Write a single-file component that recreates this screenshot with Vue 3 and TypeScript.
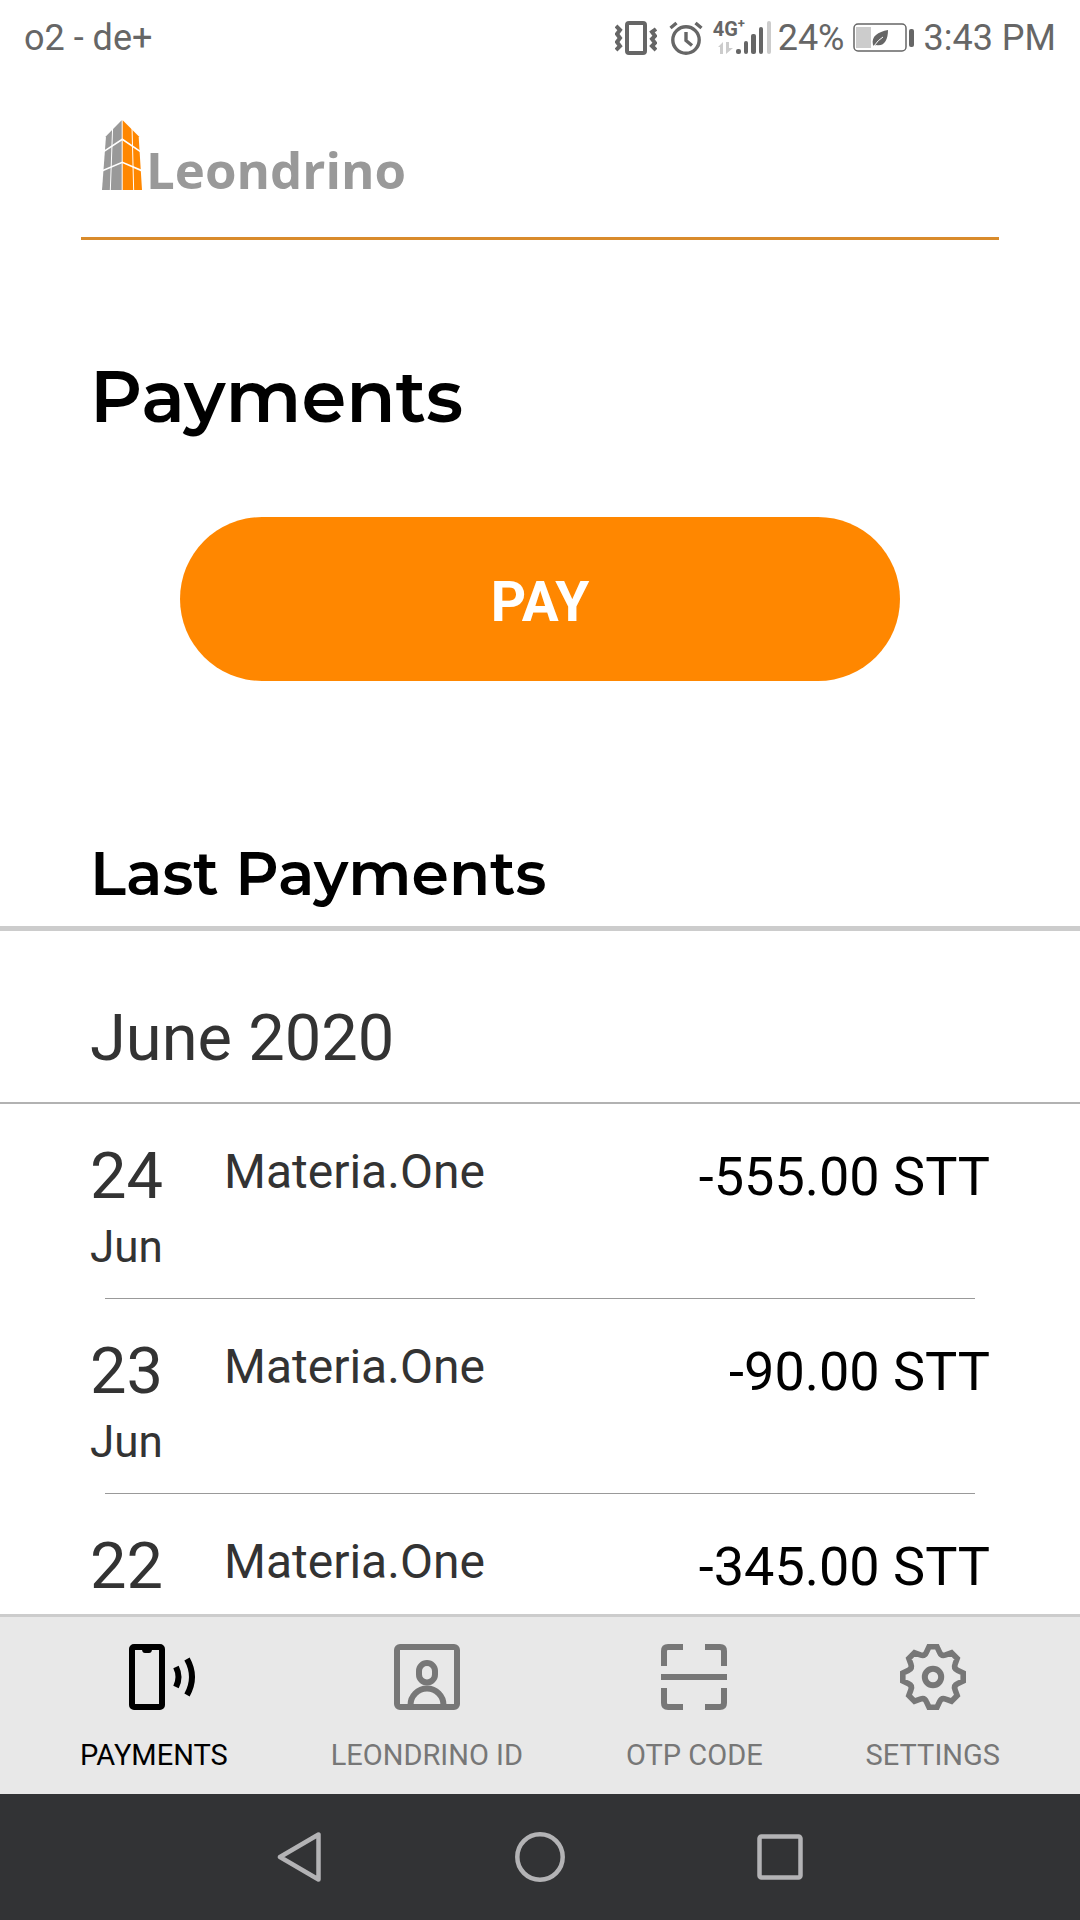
<script setup lang="ts">
interface Payment {
  day: string
  month?: string
  payee: string
  amount: string
}

const payments: Payment[] = [
  { day: '24', month: 'Jun', payee: 'Materia.One', amount: '-555.00 STT' },
  { day: '23', month: 'Jun', payee: 'Materia.One', amount: '-90.00 STT' },
  { day: '22', payee: 'Materia.One', amount: '-345.00 STT' },
]

// Outline of an eight-toothed gear around the origin
function gearPath(): string {
  const turn = (x: number, y: number, i: number): string => {
    const a = (i * Math.PI) / 4
    const px = x * Math.cos(a) - y * Math.sin(a)
    const py = x * Math.sin(a) + y * Math.cos(a)
    return `${px.toFixed(2)} ${py.toFixed(2)}`
  }
  let d = ''
  for (let i = 0; i < 8; i++) {
    d += `${i === 0 ? 'M' : 'L'}${turn(-4, -30.2, i)}L${turn(4, -30.2, i)}`
    d += `L${turn(6.6, -24.6, i)}Q${turn(8.4, -20.4, i)} ${turn(-6.6, -24.6, i + 1)}`
  }
  return d + 'Z'
}

const gear = gearPath()
</script>

<template>
  <div class="screen">
    <div class="status">
      <span>o2 - de+</span>
      <div class="status-right">
        <svg class="vibrate" width="42" height="34" viewBox="0 0 42 34" fill="none" stroke="#666">
          <rect x="12" y="2" width="18" height="30" rx="2" stroke-width="4" />
          <path d="M1 5l4 4-3 4 3 4-3 4 3 4-4 4M41 8l-4 3 3 4-3 3 3 4-3 3 4 4" stroke-width="4" />
        </svg>
        <svg class="alarm" width="34" height="34" viewBox="0 0 34 34" fill="none" stroke="#666">
          <circle cx="17" cy="19" r="13.2" stroke-width="3.4" />
          <path d="M1.500 7l6-5M32.500 7l-6-5" stroke-width="3.400" />
          <path d="M17 11v8.500l6 5" stroke-width="3.400" />
        </svg>
        <div class="network">
          <span class="network-type">4G<sup>+</sup></span>
          <svg width="59" height="34" viewBox="0 0 59 34" fill="#666">
            <path d="M5 26l5-5v12h-3v-7zM13 21v12l7-6h-4v-6z" fill="#ccc" />
            <rect x="23" y="28" width="5" height="5" rx="2" />
            <rect x="31" y="20" width="4" height="13" rx="2" />
            <rect x="38" y="13" width="5" height="20" rx="2" />
            <rect x="46" y="6" width="4" height="27" rx="2" />
            <rect x="54" y="0" width="4" height="33" rx="2" fill="#ccc" />
          </svg>
        </div>
        <span class="percent">24%</span>
        <svg class="battery" width="61" height="30" viewBox="0 0 61 30">
          <rect x="1" y="1" width="52" height="27" rx="4" fill="none" stroke="#666" stroke-width="1.500" />
          <rect x="3" y="4" width="15" height="21" fill="#ccc" />
          <path d="M20 22C18 13 25 9 35 7c0 10-4 17-12 15l-2 1z" fill="#666" />
          <path d="M21 23q4-6 9-9" fill="none" stroke="#fff" />
          <rect x="56" y="6" width="5" height="18" rx="2" fill="#666" />
        </svg>
        <span>3:43 PM</span>
      </div>
    </div>

    <header class="brand">
      <svg width="40" height="70" viewBox="96 60 120 210" aria-hidden="true">
        <path d="M155 61L108 109L96 270H155Z" fill="#999" />
        <path d="M158 61L206 109L216 270H158Z" fill="#ff8700" />
        <path d="M128 80L121 270M186 80L191 270" stroke="#fff" stroke-width="3" />
        <path d="M96 158L157 118L216 158M92 214L157 187L220 214" stroke="#fff" stroke-width="5" fill="none" />
      </svg>
      <span class="brand-name">Leondrino</span>
    </header>

    <main>
      <h1>Payments</h1>
      <button class="pay" type="button">PAY</button>

      <h2>Last Payments</h2>
      <h3>June 2020</h3>
      <ul class="payments">
        <li v-for="p in payments" :key="p.day">
          <div class="payment">
            <div class="date">
              <span class="day">{{ p.day }}</span>
              <span v-if="p.month" class="month">{{ p.month }}</span>
            </div>
            <span class="payee">{{ p.payee }}</span>
            <span class="amount">{{ p.amount }}</span>
          </div>
        </li>
      </ul>
    </main>

    <nav class="tabs">
      <a class="tab active" href="#payments">
        <svg width="84" height="66" viewBox="0 0 84 66" fill="none" stroke="currentColor" stroke-width="6">
          <rect x="20" y="3" width="30" height="60" rx="2" />
          <path d="M30 5h10q0 4-3 4h-4q-3 0-3-4z" fill="currentColor" stroke="none" />
          <path d="M64 23q5 10 0 20M75 15q10 18 0 36" />
        </svg>
        <span>PAYMENTS</span>
      </a>
      <a class="tab" href="#leondrino-id">
        <svg width="66" height="66" viewBox="0 0 66 66" fill="none" stroke="currentColor" stroke-width="6">
          <rect x="3" y="3" width="60" height="60" rx="3" />
          <rect x="25" y="19" width="16" height="19.500" rx="8" stroke-width="6" />
          <path d="M16.500 63v-2a16.500 16.500 0 0 1 33 0v2" />
        </svg>
        <span>LEONDRINO ID</span>
      </a>
      <a class="tab" href="#otp-code">
        <svg width="66" height="66" viewBox="0 0 66 66" fill="none" stroke="currentColor" stroke-width="6">
          <path d="M3 22V7q0-4 4-4h15M44 3h15q4 0 4 4v15M63 44v15q0 4-4 4H44M22 63H7q-4 0-4-4V44M0 33h66" />
        </svg>
        <span>OTP CODE</span>
      </a>
      <a class="tab" href="#settings">
        <svg width="66" height="66" viewBox="-33 -33 66 66" fill="none" stroke="currentColor">
          <path :d="gear" stroke-width="5.600" />
          <circle r="8.200" stroke-width="6" />
        </svg>
        <span>SETTINGS</span>
      </a>
    </nav>

    <div class="system">
      <button type="button" aria-label="Back">
        <svg width="50" height="50" viewBox="0 0 50 50">
          <path d="M5 25L43.500 2.500v45z" stroke-linejoin="round" />
        </svg>
      </button>
      <button type="button" aria-label="Home">
        <svg width="50" height="50" viewBox="0 0 50 50"><circle cx="25" cy="25" r="22.700" /></svg>
      </button>
      <button type="button" aria-label="Recent apps">
        <svg width="50" height="50" viewBox="0 0 50 50">
          <rect x="4.500" y="4.500" width="41" height="41" rx="2" />
        </svg>
      </button>
    </div>
  </div>
</template>

<style>
body {
  margin: 0;
  background: #fff;
}
</style>

<style scoped>
.screen {
  display: flex;
  flex-direction: column;
  height: 100vh;
  overflow: hidden;
  background: #fff;
  color: #000;
  font-family: Roboto, "Noto Sans", sans-serif;
}

svg {
  display: block;
  flex: none;
}

.status {
  display: flex;
  flex: none;
  justify-content: space-between;
  padding: 0 24px;
  color: #666;
  font-size: 36px;
  line-height: 76px;
}

.status-right {
  display: flex;
  align-items: center;
}

.alarm {
  margin-left: 12px;
}

.network {
  position: relative;
  margin-left: 10px;
}

.network-type {
  position: absolute;
  top: 0;
  left: 0;
  font-family: "Liberation Sans Narrow", Roboto, sans-serif;
  font-size: 20px;
  font-weight: 700;
  line-height: 16px;
}

.network-type sup {
  font-size: 13px;
  line-height: 0;
}

.percent {
  margin-left: 6px;
}

.battery {
  margin: 0 10px 0 8px;
}

.brand {
  display: flex;
  flex: none;
  align-items: flex-end;
  gap: 4px;
  margin: 0 81px;
  padding: 44px 0 47px 21px;
  border-bottom: 3px solid #d98b2b;
}

.brand-name {
  color: #999;
  font-family: "Open Sans", "Noto Sans", sans-serif;
  font-size: 51px;
  font-weight: 700;
  line-height: 42px;
}

main {
  display: flex;
  flex: 1;
  flex-direction: column;
  min-height: 0;
  overflow: hidden;
}

main > * {
  flex: none;
}

h1,
h2 {
  margin: 0;
  font-family: Montserrat, Inter, sans-serif;
  font-weight: 600;
}

h1 {
  padding: 110px 90px 75px;
  font-size: 72px;
  line-height: 92px;
}

.pay {
  height: 164px;
  margin: 0 180px;
  padding: 5px 0 0;
  border: 0;
  border-radius: 82px;
  background: #ff8700;
  color: #fff;
  font-family: inherit;
  font-size: 55px;
  font-weight: 700;
}

h2 {
  padding: 153px 90px 12px;
  border-bottom: 5px solid #ccc;
  font-size: 60px;
  line-height: 80px;
}

h3 {
  margin: 0;
  padding: 67px 90px 24px;
  border-bottom: 2px solid #b2b2b2;
  color: #333;
  font-size: 65px;
  font-weight: 400;
  line-height: 80px;
}

.payments {
  margin: 0;
  padding: 0;
  list-style: none;
}

.payments li::after {
  display: block;
  height: 1px;
  margin: 0 105px;
  background: #999;
  content: "";
}

.payment {
  display: flex;
  align-items: flex-start;
  padding: 38px 90px 27px;
  color: #333;
}

.date {
  display: flex;
  flex-direction: column;
  gap: 13px;
  width: 134px;
}

.day {
  font-size: 65px;
  line-height: 68px;
}

.month {
  font-size: 44px;
  line-height: 48px;
}

.payee {
  flex: 1;
  font-size: 48px;
  line-height: 60px;
}

.amount {
  color: #000;
  font-size: 54px;
  line-height: 70px;
}

.tabs {
  display: flex;
  flex: none;
  justify-content: space-between;
  padding: 27px 80px 21px;
  border-top: 3px solid #ccc;
  background: #e8e8e8;
}

.tab {
  display: flex;
  flex-direction: column;
  align-items: center;
  gap: 27px;
  color: #777;
  font-size: 29px;
  line-height: 36px;
  text-decoration: none;
}

.tab.active {
  color: #000;
}

.system {
  display: flex;
  flex: none;
  align-items: center;
  justify-content: center;
  gap: 190px;
  height: 126px;
  background: #323335;
}

.system button {
  padding: 0;
  border: 0;
  background: none;
}

.system svg {
  fill: none;
  stroke: #b3b3b5;
  stroke-width: 4.500px;
}
</style>
